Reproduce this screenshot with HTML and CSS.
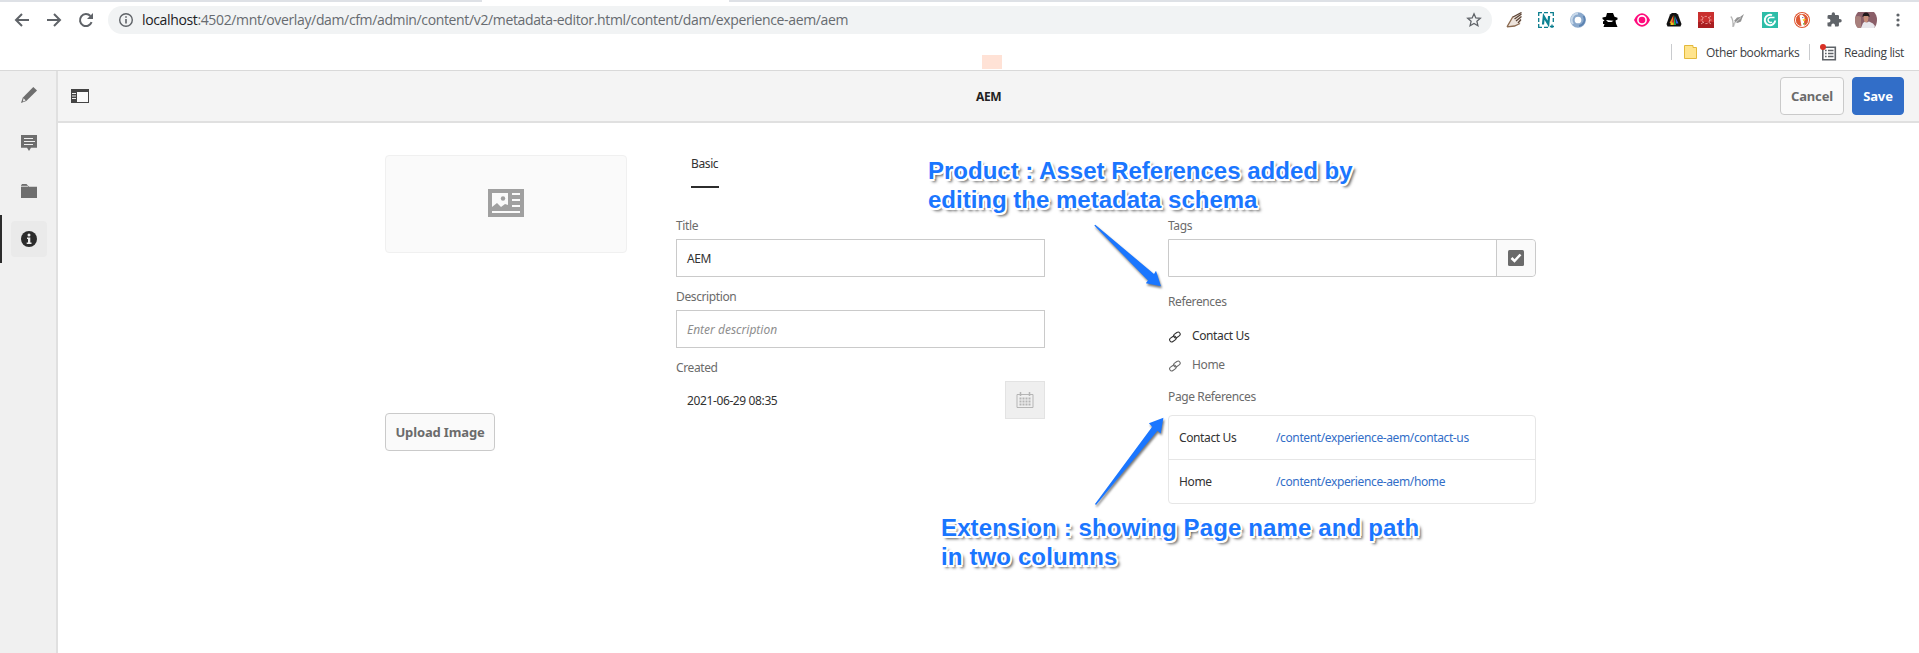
FILE: index.html
```html
<!DOCTYPE html>
<html lang="en">
<head>
<meta charset="utf-8">
<title>AEM</title>
<link rel="stylesheet" href="styles.css">
</head>
<body>
<div class="screen">
  <div class="browser">
    <div class="tabstrip"><span class="active-tab"></span></div>
    <div class="toolbar">
      <div class="nav">
        <svg width="16" height="16" viewBox="0 0 16 16"><path d="M15 8H2M8 2L2 8l6 6" fill="none" stroke="#5f6368" stroke-width="2"/></svg>
        <svg width="16" height="16" viewBox="0 0 16 16"><path d="M1 8h13M8 2l6 6-6 6" fill="none" stroke="#5f6368" stroke-width="2"/></svg>
        <svg width="16" height="16" viewBox="0 0 16 16"><path d="M13.6 10.2A6 6 0 1 1 12.4 4" fill="none" stroke="#5f6368" stroke-width="2"/><path d="M15 1v6H9z" fill="#5f6368"/></svg>
      </div>
      <div class="address">
        <svg width="16" height="16" viewBox="0 0 16 16"><circle cx="8" cy="8" r="6.3" fill="none" stroke="#5f6368" stroke-width="1.4"/><path d="M8 7v4.6M8 4.2v1.6" stroke="#5f6368" stroke-width="1.6"/></svg>
        <span class="url"><b>localhost</b>:4502/mnt/overlay/dam/cfm/admin/content/v2/metadata-editor.html/content/dam/experience-aem/aem</span>
        <svg class="star" width="16" height="16" viewBox="0 0 16 16"><path d="M8 1.8l1.8 4.1 4.5.4-3.4 3 1 4.4L8 11.4l-3.900 2.300 1-4.400-3.400-3 4.500-.4z" fill="none" stroke="#5f6368" stroke-width="1.3"/></svg>
      </div>
      <div class="extensions">
        <svg width="16" height="16" viewBox="0 0 16 16"><path d="M1 14.800L7 4.500l8.500-4-1 11-6 2.500z" fill="#eee4dc"/><path d="M1 14.800L7 4.500M1 14.800L8.500 14l5.500-2.500" fill="none" stroke="#8a6a50" stroke-width="1.300"/><path d="M7 5l8.500-4.500M8.500 7l7-5M10 9l5.500-4.500M12 11l3-3.500" stroke="#5b4436" stroke-width="1.300"/></svg>
        <svg width="16" height="16" viewBox="0 0 16 16"><path d="M.7 4V.7H4M6 .7h4M12 .7h3.300V4M.7 6v4M15.300 6v4M.7 12v3.300H4M6 15.300h4M12 14.500h4M14 12.500v4" fill="none" stroke="#0b7d8e" stroke-width="1.300"/><path d="M5 12.500l.8-8 4.500 7.500.8-8" fill="none" stroke="#0b8292" stroke-width="2.200"/></svg>
        <svg width="16" height="16" viewBox="0 0 16 16"><circle cx="8" cy="8" r="5.600" fill="none" stroke="#8ba9cc" stroke-width="4.500"/><path d="M3 12A6.500 6.500 0 0 1 8 1.500" fill="none" stroke="#c7d8ea" stroke-width="2"/><path d="M13.500 4A6.500 6.500 0 0 1 9 14" fill="none" stroke="#5c83b1" stroke-width="1.800"/></svg>
        <svg width="16" height="16" viewBox="0 0 16 16"><path d="M5 1h6l1.500 3.800 3 1v1.700l-2 1 .5 3 1.500 3.500h-14l1-3H1V9.500l1.500-1L.5 7V5.500L4 4.800z" fill="#000"/><path d="M4 8l7.500.7L9.500 10H6z" fill="#fff"/></svg>
        <svg width="16" height="16" viewBox="0 0 16 16"><path d="M0 8C4-1 12-1 16 8 12 17 4 17 0 8z" fill="#ff0a7c"/><circle cx="8" cy="8" r="4.100" fill="#ff0a7c" stroke="#fff" stroke-width="1.600"/></svg>
        <svg width="16" height="16" viewBox="0 0 16 16"><path d="M6 1h4l2 1.500 3.500 9.500-1 2.500h-13L.5 12 4 2.500z" fill="#111"/><path d="M7.500 3L3.500 11h3z" fill="#f6822b"/><path d="M8 3v10H6.500z" fill="#e22"/><path d="M8 3l2 10H8z" fill="#24b34b"/><path d="M9 4l3.500 7.500H10z" fill="#3764e8"/><path d="M4.500 10.500h3V13h-3z" fill="#ebc51f"/></svg>
        <svg width="16" height="16" viewBox="0 0 16 16"><path d="M0 0h16v16H0z" fill="#c9302f"/><path d="M0 10h16v6H0z" fill="#a91e21"/><circle cx="8" cy="8" r="3.600" fill="none" stroke="#efa09d" stroke-dasharray="2.500 1.270"/><path d="M3 4l2 1.500M13 4l-2 1.500M3 12l2-1.500M13 12l-2-1.500M2.500 8h2M11.500 8h2" stroke="#efa09d" stroke-width=".9"/></svg>
        <svg width="16" height="16" viewBox="0 0 16 16"><path d="M.8 4.500c2 2 2.500 5 2.200 10.500M3.500 14.500c0-3 1-4 3-5" fill="none" stroke="#b4b4b4" stroke-width="1.300"/><path d="M4 9l3-3.500 3-.5 4-3-2 4.500-1 3-3.500 1.500z" fill="#929292"/><path d="M4.500 11.500L11 5.500" stroke="#ddd" stroke-width=".8"/></svg>
        <svg width="16" height="16" viewBox="0 0 16 16"><path d="M0 0h16v16H0z" fill="#2dbda8"/><path d="M10 3.200A5.200 5.200 0 1 0 13.200 8.500" fill="none" stroke="#fff" stroke-width="2"/><path d="M12.500 5.500H9a2.500 2.500 0 1 0 1 4.500" fill="none" stroke="#fff" stroke-width="1.400"/></svg>
        <svg width="16" height="16" viewBox="0 0 16 16"><circle cx="8" cy="8" r="8" fill="#de5833"/><circle cx="8" cy="8" r="6.600" fill="none" stroke="#fff" stroke-width=".9"/><path d="M5.500 3.500L8 2.500l2.500 2.500v3l-.5 2 .5 4L7.500 14z" fill="#fff"/><path d="M8.500 7.300h3.700L9.500 9.300z" fill="#fdd20a"/><path d="M9 11l2.500.7L9 12.700z" fill="#65bc46"/><circle cx="8.800" cy="5.500" r=".6" fill="#2d4f8e"/></svg>
        <svg width="16" height="16" viewBox="0 0 24 24"><path d="M21 10.500h-1.500V6.500a2 2 0 0 0-2-2h-4V3A2.500 2.500 0 0 0 8.500 3v1.500H4.300a2 2 0 0 0-2 2v3.800H4a2.700 2.700 0 0 1 0 5.400H2.200v4a2 2 0 0 0 2 2H8V20a2.700 2.700 0 0 1 5.400 0v1.700h4a2 2 0 0 0 2-2v-4H21a2.500 2.500 0 0 0 0-5.200z" fill="#5f6368"/></svg>
        <svg class="avatar" width="22" height="16" viewBox="0 0 22 16"><path d="M3 0h16q3 3 3 8t-3 8H3Q0 13 0 8t3-8z" fill="#8b5f69"/><path d="M0 5q3-2 6 0v11H3Q0 13 0 8z" fill="#a8807c"/><path d="M6 16l2-5 2-1.500 2 1 2-1 4 2 2 2.500-1 2z" fill="#e8e7ec"/><path d="M7.500 5q0-4.500 3.500-4.500T14.500 5z" fill="#21191b"/><path d="M8.500 4h5q0 6-2.500 6.500Q8.500 10 8.500 4z" fill="#c78e78"/></svg>
        <svg width="16" height="16" viewBox="0 0 16 16"><g fill="#5f6368"><circle cx="8" cy="3" r="1.600"/><circle cx="8" cy="8" r="1.600"/><circle cx="8" cy="13" r="1.600"/></g></svg>
      </div>
    </div>
    <div class="bookmarks">
      <span class="bookmark-mark"></span>
      <span class="divider"></span>
      <svg class="bm-folder" width="14" height="14" viewBox="0 0 14 14"><path d="M.5.500h8.500v2h3.500v11H.500z" fill="#ffe48d" stroke="#e3b93c"/></svg>
      <span class="other">Other bookmarks</span>
      <span class="divider"></span>
      <svg class="list-icon" width="17" height="17" viewBox="0 0 17 17"><path d="M2.800 3.300h12.500v12.500H2.800z" fill="#fff" stroke="#5f6368" stroke-width="1.600"/><path d="M5 6.500h1.600M5 9.500h1.600M5 12.500h1.600M8 6.500h5.500M8 9.500h5.500M8 12.500h5.500" stroke="#5f6368" stroke-width="1.500"/><circle cx="3" cy="3" r="3" fill="#d93025"/></svg>
      <span class="reading">Reading list</span>
    </div>
  </div>

  <div class="app">
    <div class="rail">
      <div class="rail-item"><svg width="16" height="16" viewBox="0 0 16 16"><path d="M12.300 0L16 3.500 5.300 14 0 16l1.700-5.300z" fill="#6e6e6e"/><path d="M2.500 11.300l2.200 2.200-2.800 1z" fill="#eee"/></svg></div>
      <div class="rail-item"><svg width="16" height="16" viewBox="0 0 16 16"><path d="M0 0h16v12.700h-6L8 16l-2-3.300H0z" fill="#6e6e6e"/><path d="M3 3.500h9M3 6.500h11M3 9.500h9" stroke="#f0f0f0"/></svg></div>
      <div class="rail-item"><svg width="16" height="16" viewBox="0 0 16 16"><path d="M0 2.500L1 1h4.500L8 3.800h8V15H0z" fill="#6e6e6e"/><path d="M0 3.300h7" stroke="#f0f0f0" stroke-width=".8"/></svg></div>
      <div class="rail-item selected"><svg width="16" height="16" viewBox="0 0 16 16"><circle cx="8" cy="8" r="8" fill="#2c2c2c"/><path d="M6 6.500h3.300v5h1.200v1.400H5.700v-1.400H7V7.900H6z" fill="#eee"/><circle cx="8" cy="4" r="1.500" fill="#eee"/></svg></div>
    </div>
    <div class="main">
      <header class="header">
        <svg width="18" height="14" viewBox="0 0 18 14"><path d="M0 0h18v14H0z" fill="#444"/><path d="M6 3h11v10H6z" fill="#fafafa"/><path d="M1 4.500h4M1 7h4M1 9.500h4" stroke="#eee"/></svg>
        <h1>AEM</h1>
        <button class="btn cancel"><span>Cancel</span></button>
        <button class="btn save"><span>Save</span></button>
      </header>
      <div class="content">
        <div class="col-image">
          <div class="thumb"><svg width="36" height="28" viewBox="0 0 36 28"><path d="M0 0h36v28H0z" fill="#a0a0a0"/><path d="M4 4h16v12l-3-1-4 3-4-4-5 4z" fill="#fafafa"/><circle cx="15" cy="9.500" r="2.200" fill="#a0a0a0"/><path d="M24 5h8M24 11h8M24 17h8M4 23h28" stroke="#fafafa" stroke-width="2"/></svg></div>
          <button class="btn upload"><span>Upload Image</span></button>
        </div>
        <div class="col-basic">
          <div class="tab">Basic</div>
          <label>Title</label>
          <div class="input"><span>AEM</span></div>
          <label>Description</label>
          <div class="input placeholder"><span>Enter description</span></div>
          <label>Created</label>
          <div class="date"><span>2021-06-29 08:35</span>
            <div class="calendar"><svg width="18" height="16" viewBox="0 0 18 16"><path d="M1 2.500h16v13H1z" fill="none" stroke="#b5b5b5"/><path d="M4.500 0v4M13.500 0v4" stroke="#b5b5b5" stroke-width="1.500"/><path d="M3.500 6.500h11M3.500 9.500h11M3.500 12.500h11" stroke="#b5b5b5" stroke-width="2" stroke-dasharray="2 1"/></svg></div>
          </div>
        </div>
        <div class="col-refs">
          <label>Tags</label>
          <div class="tags"><div class="tags-field"></div><div class="picker"><svg width="16" height="16" viewBox="0 0 16 16"><rect width="16" height="16" rx="1.500" fill="#6b6b6b"/><path d="M3.500 8l3 3 6-6.500" fill="none" stroke="#fff" stroke-width="2.500"/></svg></div></div>
          <label class="refs-label">References</label>
          <div class="ref active"><svg width="12" height="12" viewBox="0 0 12 12"><g fill="none" stroke="currentColor" stroke-width="1.100"><rect x="-3.500" y="-2.100" width="7" height="4.200" rx="2.100" transform="translate(7.900 4) rotate(-35)"/><rect x="-3.500" y="-2.100" width="7" height="4.200" rx="2.100" transform="translate(3.900 8) rotate(-35)"/></g></svg><span>Contact Us</span></div>
          <div class="ref"><svg width="12" height="12" viewBox="0 0 12 12"><g fill="none" stroke="currentColor" stroke-width="1.100"><rect x="-3.500" y="-2.100" width="7" height="4.200" rx="2.100" transform="translate(7.900 4) rotate(-35)"/><rect x="-3.500" y="-2.100" width="7" height="4.200" rx="2.100" transform="translate(3.900 8) rotate(-35)"/></g></svg><span>Home</span></div>
          <label class="pages-label">Page References</label>
          <div class="table">
            <div class="row"><span>Contact Us</span><a>/content/experience-aem/contact-us</a></div>
            <div class="row"><span>Home</span><a>/content/experience-aem/home</a></div>
          </div>
        </div>
      </div>
    </div>
  </div>

  <p class="note note-product">Product : Asset References added by<br>editing the metadata schema</p>
  <p class="note note-extension">Extension : showing Page name and path<br>in two columns</p>
  <svg class="arrows" width="80" height="290" viewBox="1090 220 80 290"><path d="M1094.300 225.500l1-.8 58.700 49.300 2-3.300 5 15.500-15.200-3 2.200-2.700zM1095 504l57.200-77.300-3.300-3.500 14.500-5.500-2.700 15.800-3.200-2.700-61.500 74.200z" fill="#1a76ff"/></svg>
</div>
</body>
</html>
```
FILE: styles.css
```css
* { box-sizing: border-box; }
body { margin: 0; background: #fff; font-family: "Noto Sans", sans-serif; font-size: 12px; color: #323232; }
svg { display: block; flex: none; }
.screen { position: relative; width: 1919px; height: 653px; overflow: hidden; display: flex; flex-direction: column; }

/* Browser chrome */
.browser { height: 71px; border-bottom: 1px solid #d9d9d9; font-family: "Open Sans", sans-serif; }
.tabstrip { height: 2px; background: #dee1e6; padding-left: 482px; }
.active-tab { display: block; width: 247px; height: 2px; background: #fff; }
.toolbar { display: flex; align-items: center; height: 36px; padding-left: 14px; }
.nav { display: flex; gap: 16px; width: 94px; }
.address { display: flex; align-items: center; width: 1384px; height: 28px; border-radius: 14px; background: #f1f3f4; padding: 0 10px; }
.url { flex: 1; margin-left: 8px; font-size: 14px; line-height: 20px; color: #676b70; letter-spacing: -.36px; white-space: nowrap; }
.url b { font-weight: 400; color: #202124; }
.extensions { display: flex; gap: 16px; margin-left: 14px; }
.avatar { margin: 0 -3px; }
.bookmarks { display: flex; align-items: center; height: 28px; font-size: 12px; letter-spacing: -.35px; color: #3c4043; white-space: nowrap; }
.bookmark-mark { align-self: flex-end; width: 20px; height: 14px; margin: 0 669px -3px 982px; background: #ffe2d6; flex: none; }
.divider { width: 1px; height: 16px; background: #c9cbce; flex: none; }
.bm-folder { margin: 0 8px 0 12px; }
.other { width: 103px; }
.list-icon { margin: 0 7px 0 10px; }

/* Application */
.app { display: flex; flex: 1; letter-spacing: -.38px; }
.rail { width: 58px; background: #f0f0f0; border-right: 2px solid #e0e0e0; }
.rail-item { height: 48px; display: flex; align-items: center; padding-left: 21px; }
.rail-item.selected { border-left: 2px solid #2c2c2c; padding-left: 9px; }
.selected svg { box-sizing: content-box; padding: 10px; background: #eaeaea; border-radius: 4px; }
.main { flex: 1; }
.header { display: flex; align-items: center; height: 52px; background: #f4f4f4; border-bottom: 2px solid #e0e0e0; padding: 0 15px 0 13px; }
.header h1 { margin: 0 auto 0 887px; font-size: 12px; font-weight: 700; color: #222; }
.btn { height: 38px; border: 1px solid #cacaca; border-radius: 4px; background: #fafafa; color: #6b6b6b; font: 700 13px "Noto Sans", sans-serif; letter-spacing: -.15px; padding: 0; white-space: nowrap; }
.cancel { width: 64px; margin-right: 8px; }
.save { width: 52px; background: #326ec8; border-color: #326ec8; color: #fff; }
.content { display: grid; grid-template-columns: 291px 492px 368px; padding-left: 327px; }
.col-basic { width: 369px; }
.thumb { display: flex; align-items: center; justify-content: center; width: 242px; height: 98px; margin-top: 32px; background: #fafafa; border: 1px solid #f0f0f0; border-radius: 4px; padding-bottom: 2px; }
.upload { width: 110px; margin-top: 160px; }
.tab { width: 28px; height: 35px; margin: 30px 0 28px 15px; padding-top: 2px; border-bottom: 2px solid #2c2c2c; line-height: 17px; white-space: nowrap; }
label { display: block; height: 20px; margin-bottom: 3px; line-height: 20px; color: #6b6b6b; }
.input { display: flex; align-items: center; height: 38px; margin-bottom: 10px; border: 1px solid #cacaca; padding-left: 10px; }
.placeholder { font-style: italic; color: #8e8e8e; letter-spacing: 0; }
.date { display: flex; align-items: center; justify-content: space-between; height: 38px; padding-left: 11px; }
.calendar { display: flex; align-items: center; justify-content: center; width: 40px; height: 38px; background: #efefef; border: 1px solid #e3e3e3; }
.col-refs { padding-top: 93px; }
.tags { display: flex; height: 38px; border: 1px solid #cacaca; border-radius: 0 4px 4px 0; margin-bottom: 15px; }
.tags-field { flex: 1; border-right: 1px solid #cacaca; }
.picker { display: flex; align-items: center; justify-content: center; width: 38px; background: #fafafa; border-radius: 0 4px 4px 0; }
.refs-label { margin-bottom: 9px; }
.ref { display: flex; align-items: center; height: 29px; gap: 11px; padding-left: 1px; color: #6b6b6b; }
.ref svg { margin-top: 2px; }
.ref.active { color: #323232; }
.pages-label { margin: 8px 0; }
.table { border: 1px solid #e6e6e6; border-radius: 4px; }
.row { display: grid; grid-template-columns: 97px 1fr; align-items: center; height: 43px; padding-left: 10px; }
.row + .row { height: 44px; border-top: 1px solid #e6e6e6; }
.row a { color: #326ec8; }

/* Annotations over the page */
.note { position: absolute; margin: 0; font: 700 24px/29px "Liberation Sans", Arial, sans-serif; color: #1a76ff; white-space: nowrap; text-shadow: -2px 0 #fff, 2px 0 #fff, 0 -2px #fff, 0 2px #fff, -1.500px -1.500px #fff, 1.500px -1.500px #fff, -1.500px 1.500px #fff, 1.500px 1.500px #fff, 3px 3px 3px #555; }
.note-product { left: 928px; top: 156px; }
.note-extension { left: 941px; top: 513px; letter-spacing: .13px; }
.arrows { position: absolute; left: 1090px; top: 220px; filter: drop-shadow(1px 2px 1px #0008); }
```
